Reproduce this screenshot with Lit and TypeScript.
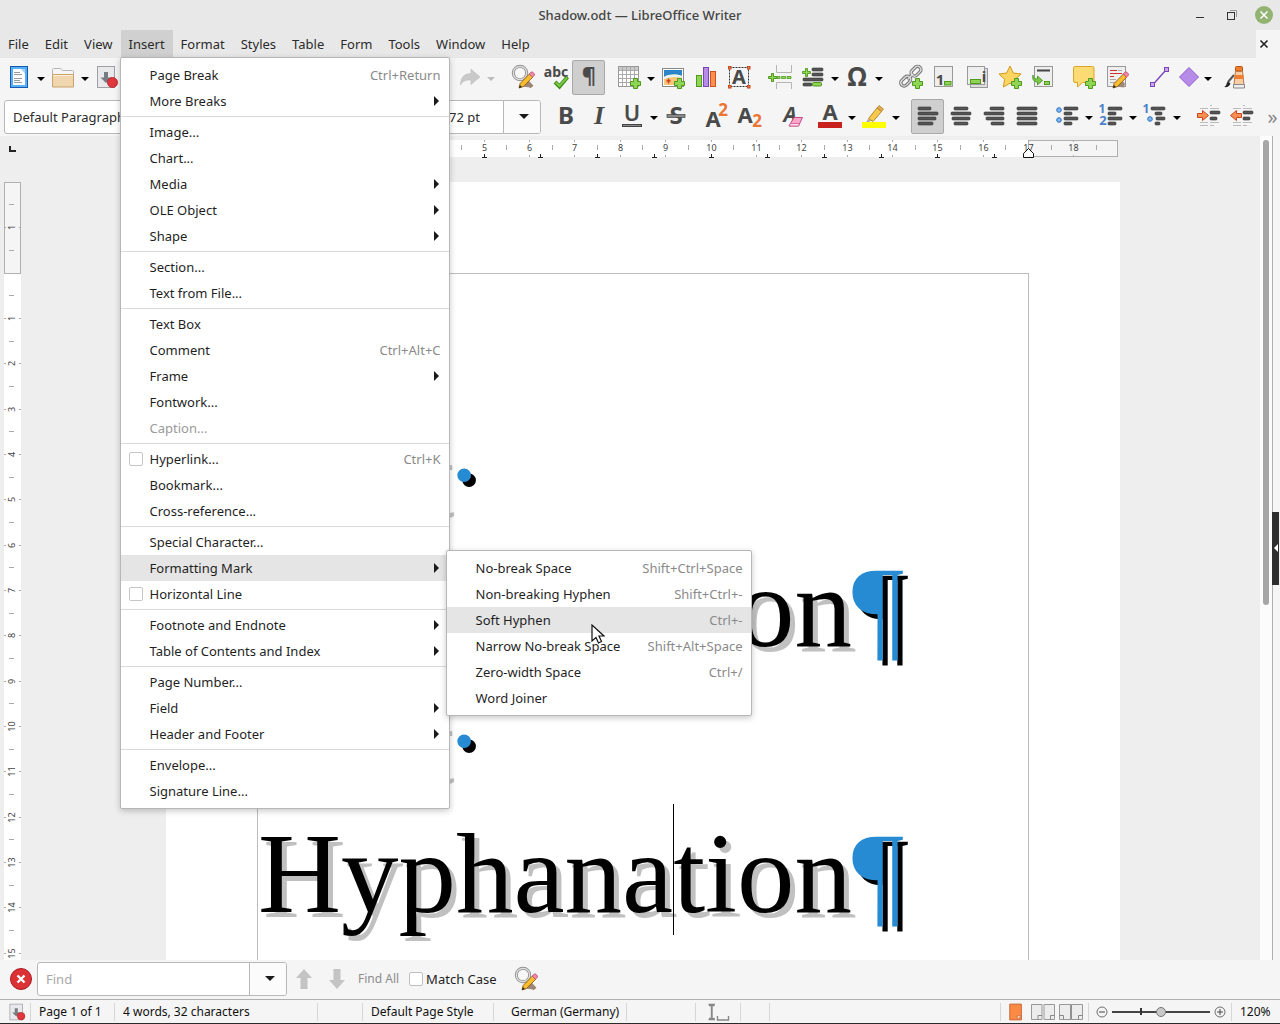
import { LitElement, html, svg, css, nothing } from "lit";
import { customElement, property } from "lit/decorators.js";
import { classMap } from "lit/directives/class-map.js";

const CM = 45.35;
const MARGIN = 91.5;

/* Shared pieces of the icon set */
const plus = (x: number, y: number) => svg`
  <path d="M${x + 3.5} ${y + 0.5}h4v3h3v4h-3v3h-4v-3h-3v-4h3z" fill="#8fd454" stroke="#4e9a1c"/>`;
const pencil = svg`
  <path d="M11 21.5l6-6 3 3-1 4z" fill="#a08878"/>
  <path d="M8 23l1.2-4.6L18.4 9l3.3 3.2-9.3 9.4z" fill="#f9bd2f" stroke="#8a5a10" stroke-width=".9"/>
  <path d="M18.2 9l2-2c1-.8 4 1.7 3.2 3.2l-1.9 2z" fill="#f48aa8" stroke="#b04466" stroke-width=".7"/>
  <path d="M8 23l.9-3 2 2z" fill="#222"/>`;
const bars = (rows: [number, number, number][]) =>
  rows.map(([x, y, w]) => svg`<rect x=${x} y=${y} width=${w} height="3" rx="1" fill="#555" stroke="#333" stroke-width=".6"/>`);
const letter = (t: string, x: number, y: number, size: number, extra = "") => svg`
  <text class="glyph ${extra}" x=${x} y=${y} font-size=${size}>${t}</text>`;
const sheet = svg`<rect x="2.5" y="1.5" width="18" height="20" fill="#eee" stroke="#999"/>`;

const icons: Record<string, unknown> = {
  new: svg`
    <rect x="3.5" y="1.5" width="17" height="21" fill="#5aaef5" stroke="#1359b0"/>
    <path d="M6 4h8.5L18 8v12H6z" fill="#fff"/><path d="M14 4l4 4.5V4z" fill="#a8d4fa"/>
    <path d="M7 7.5h6M7 9.5h8M7 13.5h8M7 15.5h6M7 17.5h8" stroke="#999" stroke-width="1.2"/>`,
  open: svg`
    <path d="M1.5 21.5V5c0-1 .6-1.5 1.5-1.5h6.5c1 0 1 2 2 2h10c1 0 1 .5 1 1.5v14.5z" fill="#f6f6f6" stroke="#b5b5b5"/>
    <path d="M1.5 9.5h21v12.5h-21z" fill="#efd6ae" stroke="#c9a468"/><path d="M2 10.5h20" stroke="#faeeda"/>`,
  save: svg`
    <rect x="2.5" y="1.5" width="17" height="21" fill="#e9e9ec" stroke="#a0a0a4"/>
    <path d="M9 7h4v5.5h3.5L11 18l-5.5-5.5H9z" fill="#777b82"/>
    <circle cx="17.5" cy="17.5" r="5" fill="#e0383c" stroke="#b3191f" stroke-width=".8"/>`,
  redo: svg`<path d="M3.5 20c.3-8 4-11.500 10.500-11.500V4l9 8-9 7.500V15c-5-.2-8.200 1-10.500 5z" fill="#c9c9c9" stroke="#bdbdbd" stroke-width=".6"/>`,
  find: svg`
    <path d="M13 13.5l8 8.5" stroke="#9a8070" stroke-width="4"/>
    <circle cx="9" cy="8" r="6.7" fill="#f7f7f7" stroke="#8f8f8f" stroke-width="3"/>
    <circle cx="9" cy="8" r="6.7" fill="none" stroke="#e2e2e2" stroke-width="1.2"/>${pencil}`,
  spell: svg`${letter("abc", 12, 12, 14)}
    <path d="M11 17l4.5 4.5L23.5 12" fill="none" stroke="#3f8f1d" stroke-width="4"/>
    <path d="M11.7 17.4l3.8 3.4L23 12.6" fill="none" stroke="#7cc944" stroke-width="2"/>`,
  marks: svg`${letter("¶", 12, 18, 22)}`,
  table: svg`
    <rect x="1.5" y="1.5" width="20" height="20" fill="#fff" stroke="#999"/>
    <path d="M2 2h19v3H2z" fill="#c9c9c9"/>
    <path d="M2 5.5h19M2 9.5h19M2 13.5h19M2 17.5h19M5.5 2v19M9.5 2v19M13.5 2v19M17.5 2v19" stroke="#aaa"/>${plus(13, 13)}`,
  image: svg`
    <rect x="1.5" y="3.5" width="21" height="18" fill="#fff" stroke="#888"/>
    <rect x="3" y="5" width="18" height="15" fill="#2a86c8"/>
    <path d="M3 12c5-3 12-3 18-1v9H3z" fill="#f6c777"/><path d="M3 12c5-3 12-3 18-1v2c-6-2-12-1-18 1z" fill="#e6f4fb"/>
    <path d="M7.5 13.5v5M5.5 15l4 2M9.5 15l-4 2" stroke="#d83a20" stroke-width="1.3"/>${plus(13, 13)}`,
  chart: svg`
    <rect x="2.5" y="10.5" width="5" height="11" fill="#8fd454" stroke="#4e9a1c"/>
    <rect x="9.5" y="2.5" width="5" height="19" fill="#b78be8" stroke="#7b45b8"/>
    <rect x="16.5" y="6.5" width="5" height="15" fill="#fb9050" stroke="#cc5320"/>`,
  textbox: svg`
    <rect x="2.5" y="2.5" width="19" height="19" fill="none" stroke="#333" stroke-dasharray="2 1"/>
    ${letter("A", 12, 19, 20)}
    ${[1, 20].map((x) => [1, 20].map((y) => svg`<rect x=${x + 0.5} y=${y + 0.5} width="2.5" height="2.5" fill="#f08050" stroke="#c8471b"/>`))}`,
  pagebreak: svg`
    <path d="M8.5 0v7.5h15V0M8.5 24v-6.5h15V24" fill="#f4f4f4" stroke="#b5b5b5"/>
    <path d="M9 11.5h3v2H9zM13.5 11.5h4v2h-4zM19 11.5h4v2h-4z" fill="#8fd454" stroke="#4e9a1c" stroke-width=".8"/>
    <path d="M3.5 8.5h2v3h3v2h-3v3h-2v-3h-3v-2h3z" fill="#8fd454" stroke="#4e9a1c"/>`,
  field: svg`${bars([[11, 3, 11], [11, 8, 11], [2, 13, 20], [2, 18, 9]])}
    <rect x="11.5" y="17.5" width="9" height="3.5" rx="1" fill="#8fd454" stroke="#4e9a1c"/>
    <path d="M4.5 3.5h2v3h3v2h-3v3h-2v-3h-3v-2h3z" fill="#8fd454" stroke="#4e9a1c" stroke-width=".9"/>`,
  omega: svg`${letter("Ω", 12, 21, 26)}`,
  link: svg`
    <g fill="none" stroke="#777" stroke-width="3.4"><rect x="1" y="13" width="11" height="6.5" rx="3.2" transform="rotate(-45 6.500 16)"/>
    <rect x="11.5" y="3" width="11" height="6.5" rx="3.2" transform="rotate(-45 17 6.200)"/><path d="M8.5 14.5l6-6"/></g>
    <g fill="none" stroke="#ddd" stroke-width="1.3"><rect x="1" y="13" width="11" height="6.5" rx="3.2" transform="rotate(-45 6.500 16)"/>
    <rect x="11.5" y="3" width="11" height="6.5" rx="3.2" transform="rotate(-45 17 6.200)"/><path d="M8.5 14.5l6-6"/></g>${plus(13, 13)}`,
  footnote: svg`${sheet}${letter("1", 8, 20, 15)}<rect x="12.5" y="16.5" width="6.5" height="3.5" fill="#8fd454" stroke="#4e9a1c"/>`,
  endnote: svg`<rect x="5.5" y="3.5" width="17" height="19" fill="#ddd" stroke="#999"/>
    <rect x="2.5" y="1.5" width="17" height="18" fill="#eee" stroke="#999"/>
    ${letter("i", 19, 17, 15)}<rect x="5.5" y="14.5" width="10" height="4" fill="#8fd454" stroke="#4e9a1c"/>`,
  bookmark: svg`<path d="M12 1l3.3 7 7.7 1-5.6 5.3 1.3 7.7-6.7-3.7L5.3 22l1.3-7.7L1 9l7.7-1z" fill="#fcd462" stroke="#d19a1c"/>${plus(13, 13)}`,
  crossref: svg`<rect x="3.5" y="1.5" width="18" height="20" fill="#eee" stroke="#999"/>
    <path d="M6 5.5h13" stroke="#444" stroke-width="2"/>
    <path d="M2 10c0 3 1.500 4 4.500 4v-3l5 4.500-5 4.500v-3C2.500 17 1 14 2 10z" fill="#7cc944" stroke="#3f8f1d" stroke-width=".8"/>
    <rect x="13.5" y="16.5" width="5" height="3" fill="#8fd454" stroke="#4e9a1c"/>`,
  comment: svg`<path d="M3 1.5h17.5q1.5 0 1.5 1.5v13q0 1.5-1.5 1.5H10.5L5.5 22v-4.5H3q-1.500 0-1.500-1.500V3q0-1.500 1.500-1.500z" fill="#fcdb74" stroke="#dca52c"/>${plus(13, 13)}`,
  track: svg`${sheet}<path d="M5 5.5h7M5 8.5h12M5 11.5h4" stroke="#d43030" stroke-width="1.2"/>
    <path d="M5 14.5h6M5 17.5h5M13 5.5h4" stroke="#aaa"/>${pencil}`,
  line: svg`<path d="M5 19.5L18 5" stroke="#7b45b8" stroke-width="1.4"/>
    <rect x="2.5" y="17.5" width="4" height="4" fill="#c9a6ef" stroke="#7b45b8"/><rect x="16.5" y="2.5" width="4" height="4" fill="#c9a6ef" stroke="#7b45b8"/>`,
  shape: svg`<path d="M12 2.5l9.5 9.5-9.5 9.5L2.5 12z" fill="#b78be8" stroke="#8d5ccc"/>`,
  draw: svg`<path d="M11 10L5 17" stroke="#555" stroke-width="2"/><path d="M1 22c3-1 2-4 4-5.500l2.500 2C6 22 4 22.500 1 22z" fill="#222"/>
    <path d="M12.5 6h7l1.500 14h-10z" fill="#fbcda5" stroke="#b07a52"/><rect x="12.5" y="1.5" width="7" height="4.5" rx="1" fill="#f08030" stroke="#b85410"/>
    <path d="M11.500 12h9" stroke="#f08030" stroke-width="4"/><path d="M10.500 19.500h11v3.500h-11z" fill="#eee" stroke="#888"/>`,
  bold: svg`${letter("B", 12, 20, 24)}`,
  italic: svg`${letter("I", 12, 20, 26, "it")}`,
  underline: svg`${letter("U", 12, 17, 22, "u")}<rect x="2.5" y="20.5" width="19" height="2" fill="#888" stroke="#444"/>`,
  strike: svg`${letter("S", 12, 20, 24)}<rect x="3" y="10.5" width="18" height="3" fill="#888" stroke="#444" stroke-width=".7"/>`,
  sup: svg`${letter("A", 9, 23, 22)}${letter("2", 19, 12, 17, "or")}`,
  sub: svg`${letter("A", 8, 19, 22)}${letter("2", 20, 23, 17, "or")}`,
  clear: svg`${letter("A", 10, 18, 21, "it2")}<path d="M9 22l5-8.5h8.5L18.500 22z" fill="#fba5c8" stroke="#c84a84"/><path d="M9 22h9.500l1-2.500H10.500z" fill="#ffd7e8" stroke="#c84a84" stroke-width=".7"/>`,
  fontcolor: svg`${letter("A", 12, 16, 22)}<rect x="0" y="18" width="24" height="6" fill="#c9211e"/>`,
  highlight: svg`<path d="M6 15l3.5 2-5.5 1.5z" fill="#aaa"/><path d="M6.5 14.5L15 4l4.5 3.5L11 17.5z" fill="#f9c94e" stroke="#b48a24"/>
    <path d="M15 4l2-2.500 4.500 3.500-2 2.500z" fill="#e4a94a" stroke="#a87b2a" stroke-width=".7"/><rect x="0" y="18" width="24" height="6" fill="#ff0"/>`,
  left: bars([[2, 3, 13], [2, 8, 20], [2, 13, 18], [2, 18, 15]]),
  center: bars([[5, 3, 14], [2, 8, 20], [3, 13, 18], [5, 18, 14]]),
  right: bars([[8, 3, 14], [2, 8, 20], [4, 13, 18], [9, 18, 13]]),
  justify: bars([[2, 3, 20], [2, 8, 20], [2, 13, 20], [2, 18, 20]]),
  bullets: svg`${bars([[9, 3, 14], [9, 8, 8], [9, 13, 14], [9, 18, 8]])}
    <circle cx="4" cy="6" r="2.3" fill="#7fb8f5" stroke="#2d6fc0"/><circle cx="4" cy="16" r="2.3" fill="#7fb8f5" stroke="#2d6fc0"/>`,
  numbers: svg`${bars([[9, 3, 14], [9, 8, 8], [9, 13, 14], [9, 18, 8]])}${letter("1", 3, 9, 12, "bl")}${letter("2", 4, 21, 13, "bl")}`,
  outline: svg`${bars([[8, 3, 14], [12, 8, 7], [13, 13, 9], [12, 18, 5]])}${letter("1", 3, 9, 12, "bl")}
    <circle cx="7" cy="15" r="2.3" fill="#7fb8f5" stroke="#2d6fc0"/>`,
  indent: svg`<path d="M3 4.5h8M3 18.5h8M3 21.5h8M13 1.5h2M13 4.5h9M13 18.5h9M13 21.5h4" stroke="#bbb"/>
    ${bars([[13, 7, 10], [13, 13, 7]])}<path d="M.5 9.5h5v-3l6 5-6 5v-3h-5z" fill="#fb9050" stroke="#c8471b"/>`,
  outdent: svg`<path d="M3 4.5h8M3 18.5h8M3 21.5h8M13 1.5h2M13 4.5h9M13 18.5h9M13 21.5h4" stroke="#bbb"/>
    ${bars([[13, 7, 10], [13, 13, 7]])}<path d="M11.5 9.5h-5v-3l-6 5 6 5v-3h5z" fill="#fb9050" stroke="#c8471b"/>`,
  cancel: svg`<circle cx="12" cy="12" r="10.5" fill="#dc3236" stroke="#a81c22"/><path d="M8.5 8.5l7 7M15.5 8.5l-7 7" stroke="#fff" stroke-width="2.4"/>`,
  up: svg`<path d="M12 2l8 9h-4.500v11h-7V11H4z" fill="#c4c4c4"/>`,
  down: svg`<path d="M12 22l8-9h-4.500V2h-7v11H4z" fill="#c4c4c4"/>`,
  cursormode: svg`<path d="M1 5.500h2.500v13H1M6.500 5.500H4v13h2.500M.5 4.500h6.500M.5 19.500h6.500M9.500 16v4h11v-4" fill="none" stroke="#888" stroke-width="1.400"/>`,
  single: svg`<path d="M4.500 2.500h14v19h-14z" fill="#fb8a44" stroke="#c25a2c"/><path d="M18.500 16.500l-5 5v-5z" fill="#ffe0cc" stroke="#c25a2c" stroke-width=".8"/>`,
  multi: svg`<path d="M.5 4.500h10.500v15H.5zM13 4.500h10.500v15H13z" fill="#ececec" stroke="#999"/>
    <path d="M11 15.500H7v4M23.500 15.500h-4v4" fill="none" stroke="#888"/>`,
  book: svg`<path d="M.5 4.500h11v15H.5zM12.500 4.500h11v15h-11z" fill="#ececec" stroke="#999"/>
    <path d="M.5 15.500h4v4M23.500 15.500h-4v4" fill="none" stroke="#888"/><path d="M12 4v16" stroke="#888"/>`,
  zoomout: svg`<circle cx="12" cy="12" r="6" fill="#f3f3f3" stroke="#555"/><path d="M8.500 12h7" stroke="#444" stroke-width="1.200"/>`,
  zoomin: svg`<circle cx="12" cy="12" r="6" fill="#f3f3f3" stroke="#555"/><path d="M8.500 12h7M12 8.500v7" stroke="#444" stroke-width="1.200"/>`,
};

type Tool = string;
/* "name", "name*" pressed, "name+" with a drop-down, "|n" a gap of n pixels */
const standardStart: Tool[] = ["new+", "open+", "save"];
const standard: Tool[] = ["redo+", "|10", "find", "spell", "marks*", "|7", "table+", "image", "chart", "textbox", "|8",
  "pagebreak", "field+", "omega+", "|10", "link", "footnote", "endnote", "bookmark", "crossref", "|8", "comment", "track",
  "|10", "line", "shape+", "|5", "draw"];
const formatting: Tool[] = ["bold", "italic", "underline+", "strike", "|7", "sup", "sub", "|10", "clear", "|5", "fontcolor+",
  "highlight+", "|10", "left*", "center", "right", "justify", "|7", "bullets+", "numbers+", "outline+", "|10", "indent", "outdent"];

interface Item { label: string; keys?: string; sub?: boolean; check?: boolean; off?: boolean; active?: boolean }
const insertMenu: (Item | null)[] = [
  { label: "Page Break", keys: "Ctrl+Return" }, { label: "More Breaks", sub: true }, null,
  { label: "Image..." }, { label: "Chart..." }, { label: "Media", sub: true }, { label: "OLE Object", sub: true }, { label: "Shape", sub: true }, null,
  { label: "Section..." }, { label: "Text from File..." }, null,
  { label: "Text Box" }, { label: "Comment", keys: "Ctrl+Alt+C" }, { label: "Frame", sub: true }, { label: "Fontwork..." }, { label: "Caption...", off: true }, null,
  { label: "Hyperlink...", keys: "Ctrl+K", check: true }, { label: "Bookmark..." }, { label: "Cross-reference..." }, null,
  { label: "Special Character..." }, { label: "Formatting Mark", sub: true, active: true }, { label: "Horizontal Line", check: true }, null,
  { label: "Footnote and Endnote", sub: true }, { label: "Table of Contents and Index", sub: true }, null,
  { label: "Page Number..." }, { label: "Field", sub: true }, { label: "Header and Footer", sub: true }, null,
  { label: "Envelope..." }, { label: "Signature Line..." },
];
const markMenu: Item[] = [
  { label: "No-break Space", keys: "Shift+Ctrl+Space" }, { label: "Non-breaking Hyphen", keys: "Shift+Ctrl+-" },
  { label: "Soft Hyphen", keys: "Ctrl+-", active: true }, { label: "Narrow No-break Space", keys: "Shift+Alt+Space" },
  { label: "Zero-width Space", keys: "Ctrl+/" }, { label: "Word Joiner" },
];

const base = css`
  * { box-sizing: border-box; }
  button, input { font: inherit; color: inherit; border: 0; background: none; padding: 0; margin: 0; }
`;

@customElement("lo-icon")
export class LoIcon extends LitElement {
  @property() name = "";
  @property({ type: Number }) size = 24;
  static styles = css`
    :host { display: block; }
    svg { display: block; overflow: visible; }
    .glyph { font-family: "Noto Sans", sans-serif; font-weight: 700; fill: #4a4a4a; text-anchor: middle; }
    .it { font-family: "Liberation Serif", serif; font-style: italic; }
    .it2 { font-style: italic; }
    .u { font-weight: 600; }
    .or { fill: #ee7434; }
    .bl { fill: #4a80c8; }
  `;
  render() {
    return html`<svg width=${this.size} height=${this.size} viewBox="0 0 24 24" aria-hidden="true">${icons[this.name] ?? nothing}</svg>`;
  }
}

@customElement("lo-tools")
export class LoTools extends LitElement {
  @property({ attribute: false }) tools: Tool[] = [];
  static styles = [base, css`
    :host { display: flex; align-items: center; }
    .tool { flex: 0 0 33px; height: 35px; padding-bottom: 1px; display: flex; align-items: center; justify-content: center; border-radius: 2px; }
    .tool.pressed { background: #cfcfcf; border: 1px solid #a9a9a9; }
    .tool.shape { flex-basis: 26px; }
    .drop { flex: 0 0 11px; height: 35px; display: flex; align-items: center; justify-content: center; }
    .drop::after { content: ""; margin-top: 3px; border: 4px solid transparent; border-top-color: #000; border-bottom: 0; }
    .drop.redo::after { border-top-color: #bbb; }
    .gap5 { flex: 0 0 5px; } .gap7 { flex: 0 0 7px; } .gap8 { flex: 0 0 8px; } .gap10 { flex: 0 0 10px; }
  `];
  render() {
    return this.tools.map((t) => {
      if (t[0] === "|") return html`<span class="gap${t.slice(1)}"></span>`;
      const name = t.replace(/[+*]/g, "");
      return html`<button class="tool ${name} ${t.endsWith("*") ? "pressed" : ""}" aria-label=${name}><lo-icon name=${name}></lo-icon></button>
        ${t.endsWith("+") ? html`<button class="drop ${name}" aria-label="${name} options"></button>` : nothing}`;
    });
  }
}

@customElement("lo-menu")
export class LoMenu extends LitElement {
  @property({ attribute: false }) items: (Item | null)[] = [];
  static styles = [base, css`
    :host { display: block; padding: 4px 0; background: #fff; border: 1px solid #b6b6b6; border-radius: 2px; box-shadow: 0 2px 6px rgba(0, 0, 0, .22); color: #1f1f1f; }
    .row { position: relative; }
    .item { display: flex; align-items: center; width: 100%; height: 26px; padding: 0 8px 0 29px; text-align: left; white-space: nowrap; }
    .item.check { padding-left: 8px; }
    .item.active { background: #e5e5e5; }
    .item.off { color: #9a9a9a; }
    .text { flex: 1; }
    .keys { color: #8a8a8a; }
    .box { appearance: none; width: 14px; height: 14px; margin-right: 7px; border: 1px solid #c6c6c6; border-radius: 2px; background: #fff; }
    .arrow { margin-right: 2px; border: 5px solid transparent; border-left-color: #1a1a1a; border-right: 0; }
    hr { height: 1px; margin: 2px 0; border: 0; background: #dadada; }
    .sub { position: absolute; left: 325px; top: -5px; width: 306px; z-index: 2; }
  `];
  row(item: Item) {
    const cls = classMap({ item: true, active: !!item.active, off: !!item.off, check: !!item.check });
    const inner = html`<span class="text">${item.label}</span>
      ${item.keys ? html`<span class="keys">${item.keys}</span>` : nothing}
      ${item.sub ? html`<span class="arrow"></span>` : nothing}`;
    return html`<div class="row">
      ${item.check
        ? html`<label class=${cls}><input class="box" type="checkbox">${inner}</label>`
        : html`<button class=${cls} role="menuitem" ?disabled=${item.off}>${inner}</button>`}
      ${item.sub && item.active ? html`<lo-menu class="sub" .items=${markMenu}></lo-menu>` : nothing}
    </div>`;
  }
  render() {
    return this.items.map((i) => (i ? this.row(i) : html`<hr>`));
  }
}

@customElement("app-root")
export class AppRoot extends LitElement {
  static styles = [base, css`
    :host { display: flex; flex-direction: column; height: 100vh; overflow: hidden; background: #f5f5f5; color: #2b2b2b;
      font: 13px/18px "Noto Sans", "Open Sans", sans-serif; border-bottom: 1px solid #2b2b2b; box-sizing: border-box; }
    .title { flex: 0 0 30px; display: grid; grid-template-columns: 1fr auto 1fr; align-items: center; background: #e8e8e8; }
    .title h1 { grid-column: 2; margin: 0; font: inherit; font-weight: 500; color: #444; }
    .window { display: flex; justify-content: flex-end; gap: 14px; padding-right: 7px; }
    .window button { width: 18px; height: 18px; }
    .window svg { display: block; }
    .menubar { flex: 0 0 28px; display: flex; background: #e8e8e8; }
    .entry { position: relative; display: flex; }
    .entry > button { padding: 0 8px; }
    .entry.open > button { background: #d0d0d0; }
    .popup { position: absolute; left: -1px; top: 27px; width: 330px; z-index: 5; }
    .pointer { position: absolute; left: 470px; top: 594px; z-index: 9; }
    .closedoc { margin-left: auto; width: 24px; padding-left: 3px; background: #f5f5f5; display: flex; align-items: center; }
    .bar { flex: 0 0 39px; display: flex; align-items: center; white-space: nowrap; }
    .start { flex: 0 0 452px; padding-left: 2px; }
    .combos { flex: 0 0 549px; min-width: 0; display: flex; gap: 7px; padding: 0 8px 0 4px; }
    .combo { display: flex; min-width: 0; height: 34px; background: #fff; border: 1px solid #b8b8b8; border-radius: 3px; }
    .combo input { flex: 1 1 0; width: 0; min-width: 0; padding: 0 8px; outline: 0; }
    .combo input::placeholder { color: #a9a9a9; opacity: 1; }
    .combo button { flex: 0 0 37px; padding-left: 3px; display: flex; align-items: center; justify-content: center; background: #fbfbfb; border-left: 1px solid #b8b8b8; border-radius: 0 2px 2px 0; }
    .combo button::after { content: ""; border: 5px solid transparent; border-top-color: #1a1a1a; border-bottom: 0; }
    .style { flex: 0 0 200px; } .family { flex: 1; } .size { flex: 0 0 101px; }
    .more { margin-left: auto; width: 15px; font-size: 20px; color: #888; }
    .work { flex: 1; min-height: 0; display: grid; grid-template: 46px minmax(0, 1fr) / 26px minmax(0, 1fr) 12px 8px; background: #eee; }
    .corner { margin: 10px 0 0 9px; width: 7px; height: 6px; border: solid #222; border-width: 0 0 2px 2px; }
    .across { display: flex; justify-content: center; overflow: hidden; }
    .across svg { flex: none; }
    .down { grid-row: 2; grid-column: 1; overflow: hidden; padding-left: 4px; }
    svg.ruler { display: block; font-size: 9px; }
    .ruler text { text-anchor: middle; fill: #444; }
    .paper { grid-row: 2; grid-column: 2; display: flex; justify-content: center; overflow: hidden; }
    .page { flex: 0 0 954px; padding: 91px 91px 0; background: #fff; }
    .body { min-height: 100%; border: 1px solid #bdbdbd; border-bottom: 0; color: #000;
      font: 115px/133px "Liberation Serif", serif; text-shadow: 5px 5px 0 #c0c0c0; white-space: nowrap; }
    .body p { margin: 0; height: 133px; }
    .body p:first-child { margin-top: 1px; }
    .mark { color: #268bd2; text-shadow: 5px 5px 0 #000; }
    .space { display: inline-flex; justify-content: center; width: 29px; }
    .caret { position: relative; }
    .caret::after { content: ""; position: absolute; left: 0; top: -6px; height: 131px; border-left: 1px solid #000; }
    .scroll { grid-row: 1 / 3; grid-column: 3; padding: 4px 3px; background: #fcfcfc; }
    .thumb { height: 465px; border-radius: 3px; background: #a6a6a6; }
    .side { grid-row: 1 / 3; grid-column: 4; display: flex; align-items: center; background: #f5f5f5; border-left: 1px solid #b0b0b0; }
    .handle { width: 7px; height: 73px; margin-left: -1px; background: #2e2e2e; display: flex; align-items: center; justify-content: center; }
    .handle::after { content: ""; border: 4px solid transparent; border-right-color: #fff; border-left: 0; }
    .find { flex: 0 0 39px; display: flex; align-items: center; padding: 0 0 2px 9px; }
    .find button, .find label { display: flex; align-items: center; }
    .find .combo { flex: 0 0 250px; margin: 0 5px 0 4px; }
    .find .step { width: 24px; margin-right: 9px; }
    .find .all { color: #8c8c8c; margin-right: 10px; font-size: 12px; }
    .find .case { gap: 3px; margin-right: 17px; color: #1f1f1f; }
    .tick { appearance: none; width: 14px; height: 14px; border: 1px solid #c0c0c0; border-radius: 2px; background: #fff; }
    .status { flex: 0 0 24px; display: flex; align-items: center; border-top: 1px solid #b0b0b0; color: #111; font-size: 12px; white-space: nowrap; }
    .cell { height: 18px; padding-left: 8px; border-right: 1px solid #d6d6d6; display: flex; align-items: center; }
    .w31 { flex: 0 0 31px; } .w84 { flex: 0 0 84px; } .w203 { flex: 0 0 203px; } .w45 { flex: 0 0 45px; padding-left: 12px; }
    .w131 { flex: 0 0 131px; } .w133 { flex: 0 0 133px; padding-left: 17px; } .w69 { flex: 0 0 69px; } .w29 { flex: 0 0 29px; }
    .wide { flex: 1; }
    .views { flex: 0 0 88px; padding: 0 5px; justify-content: space-between; }
    .zoom { flex: 0 0 143px; padding: 0 1px 0 3px; justify-content: space-between; }
    .last { flex: 0 0 48px; border: 0; }
    .slider { appearance: none; width: 98px; height: 14px;
      background: linear-gradient(#333, #333) 28px 50% / 2px 7px no-repeat, linear-gradient(#444, #444) 0 50% / 100% 2px no-repeat; }
    .slider::-webkit-slider-thumb { appearance: none; width: 10px; height: 10px; border: 1px solid #777; border-radius: 50%; background: #c9c9c9; }
  `];

  acrossRuler() {
    const x0 = MARGIN;
    const halves = Array.from({ length: 42 }, (_, i) => (i - 3) / 2).filter((v) => v <= 18.5);
    return svg`<svg class="ruler" width="954" height="46">
      <rect x=${x0} y="4" width="771" height="17" fill="#fff"/>
      <rect x="1.5" y="4.5" width="90" height="16" fill="#f5f5f5" stroke="#b0b0b0"/>
      <rect x="862.5" y="4.5" width="89" height="16" fill="#f5f5f5" stroke="#b0b0b0"/>
      ${halves.map((v) => {
        const x = Math.floor(x0 + v * CM) + 0.5;
        return Number.isInteger(v)
          ? svg`<path d="M${x} 4v2M${x} 19v2" stroke="#aaa"/>${v ? svg`<text x=${x} y="15">${Math.abs(v)}</text>` : nothing}`
          : svg`<path d="M${x} 9v5" stroke="#aaa"/>`;
      })}
      ${Array.from({ length: 13 }, (_, i) => {
        const x = Math.floor(x0 + (i + 1) * 1.25 * CM) + 0.5;
        return svg`<path d="M${x} 18v3M${x - 2.5} 21.5h5" stroke="#222"/>`;
      })}
      <path d="M857.5 21.5v-4l5-5 5 5v4z" fill="#fff" stroke="#111"/>
    </svg>`;
  }

  downRuler() {
    const y0 = 91;
    const halves = Array.from({ length: 40 }, (_, i) => (i - 3) / 2);
    return svg`<svg class="ruler" width="17" height="900">
      <rect y="91" width="17" height="809" fill="#fff"/>
      <rect x=".5" y=".5" width="16" height="91" fill="#f5f5f5" stroke="#b0b0b0"/>
      ${halves.filter((v) => v !== 0).map((v) => {
        const y = Math.floor(y0 + v * CM) + 0.5;
        return Number.isInteger(v)
          ? svg`<path d="M0 ${y}h2M15 ${y}h2" stroke="#aaa"/><text transform="translate(11 ${y}) rotate(-90)">${Math.abs(v)}</text>`
          : svg`<path d="M5 ${y}h5" stroke="#aaa"/>`;
      })}
    </svg>`;
  }

  render() {
    return html`
      <header class="title">
        <h1>Shadow.odt — LibreOffice Writer</h1>
        <div class="window">
          <button aria-label="Minimize"><svg width="18" height="18"><path d="M5 11.5h8" stroke="#333"/></svg></button>
          <button aria-label="Restore"><svg width="18" height="18" fill="none"><path d="M7 4.500h6.500V11" stroke="#999"/><rect x="4.500" y="6.500" width="7" height="7" stroke="#333"/></svg></button>
          <button aria-label="Close"><svg width="18" height="18"><circle cx="9" cy="9" r="9" fill="#92b372"/><path d="M5.500 5.500l7 7M12.500 5.500l-7 7" stroke="#fff" stroke-width="1.500"/></svg></button>
        </div>
      </header>
      <nav class="menubar">
        ${["File", "Edit", "View", "Insert", "Format", "Styles", "Table", "Form", "Tools", "Window", "Help"].map((m) => html`
          <div class="entry ${m === "Insert" ? "open" : ""}"><button>${m}</button>
            ${m === "Insert" ? html`<lo-menu class="popup" .items=${insertMenu}></lo-menu>
              <svg class="pointer" width="14" height="20"><path d="M1 1v16l4-3.500 2.500 5.500 3-1.500L8 12h5z" fill="#fff" stroke="#111" stroke-width="1.200"/></svg>` : nothing}
          </div>`)}
        <button class="closedoc" aria-label="Close document"><svg width="10" height="10"><path d="M1.500 1.500l7 7M8.500 1.500l-7 7" stroke="#222" stroke-width="1.600"/></svg></button>
      </nav>
      <div class="bar">
        <lo-tools class="start" .tools=${standardStart}></lo-tools>
        <lo-tools .tools=${standard}></lo-tools>
      </div>
      <div class="bar">
        <div class="combos">
          <div class="combo style"><input aria-label="Paragraph style" value="Default Paragraph Style"><button aria-label="Styles"></button></div>
          <div class="combo family"><input aria-label="Font name" value="Liberation Serif"><button aria-label="Fonts"></button></div>
          <div class="combo size"><input aria-label="Font size" value="72 pt"><button aria-label="Sizes"></button></div>
        </div>
        <lo-tools .tools=${formatting}></lo-tools>
        <button class="more" aria-label="More tools">»</button>
      </div>
      <main class="work">
        <div class="corner"></div>
        <div class="across">${this.acrossRuler()}</div>
        <div class="down">${this.downRuler()}</div>
        <div class="paper"><article class="page"><div class="body">
          <p><span class="mark">¶</span></p>
          <p>Soft<span class="mark space">·</span></p>
          <p>Hyphanation<span class="mark">¶</span></p>
          <p>Soft<span class="mark space">·</span></p>
          <p>Hyphana<span class="caret"></span>tion<span class="mark">¶</span></p>
        </div></article></div>
        <div class="scroll"><div class="thumb"></div></div>
        <div class="side"><button class="handle" aria-label="Show sidebar"></button></div>
      </main>
      <section class="find">
        <button aria-label="Close find bar"><lo-icon name="cancel"></lo-icon></button>
        <div class="combo"><input aria-label="Find" placeholder="Find"><button aria-label="Search history"></button></div>
        <button class="step" aria-label="Find previous"><lo-icon name="up"></lo-icon></button>
        <button class="step" aria-label="Find next"><lo-icon name="down"></lo-icon></button>
        <button class="all">Find All</button>
        <label class="case"><input class="tick" type="checkbox">Match Case</label>
        <button aria-label="Find and replace"><lo-icon name="find"></lo-icon></button>
      </section>
      <footer class="status">
        <div class="cell w31"><lo-icon name="save" size="18"></lo-icon></div>
        <div class="cell w84">Page 1 of 1</div>
        <div class="cell w203">4 words, 32 characters</div>
        <div class="cell w45"></div>
        <div class="cell w131">Default Page Style</div>
        <div class="cell w133">German (Germany)</div>
        <div class="cell w69"></div>
        <div class="cell w45"><lo-icon name="cursormode"></lo-icon></div>
        <div class="cell w29"></div>
        <div class="cell wide"></div>
        <div class="cell views"><button aria-label="Single page"><lo-icon name="single" size="20"></lo-icon></button><button aria-label="Multiple pages"><lo-icon name="multi"></lo-icon></button><button aria-label="Book view"><lo-icon name="book"></lo-icon></button></div>
        <div class="cell zoom"><button aria-label="Zoom out"><lo-icon name="zoomout" size="20"></lo-icon></button>
          <input class="slider" type="range" min="0" max="100" value="50" aria-label="Zoom"><button aria-label="Zoom in"><lo-icon name="zoomin" size="20"></lo-icon></button></div>
        <div class="cell last">120%</div>
      </footer>`;
  }
}
